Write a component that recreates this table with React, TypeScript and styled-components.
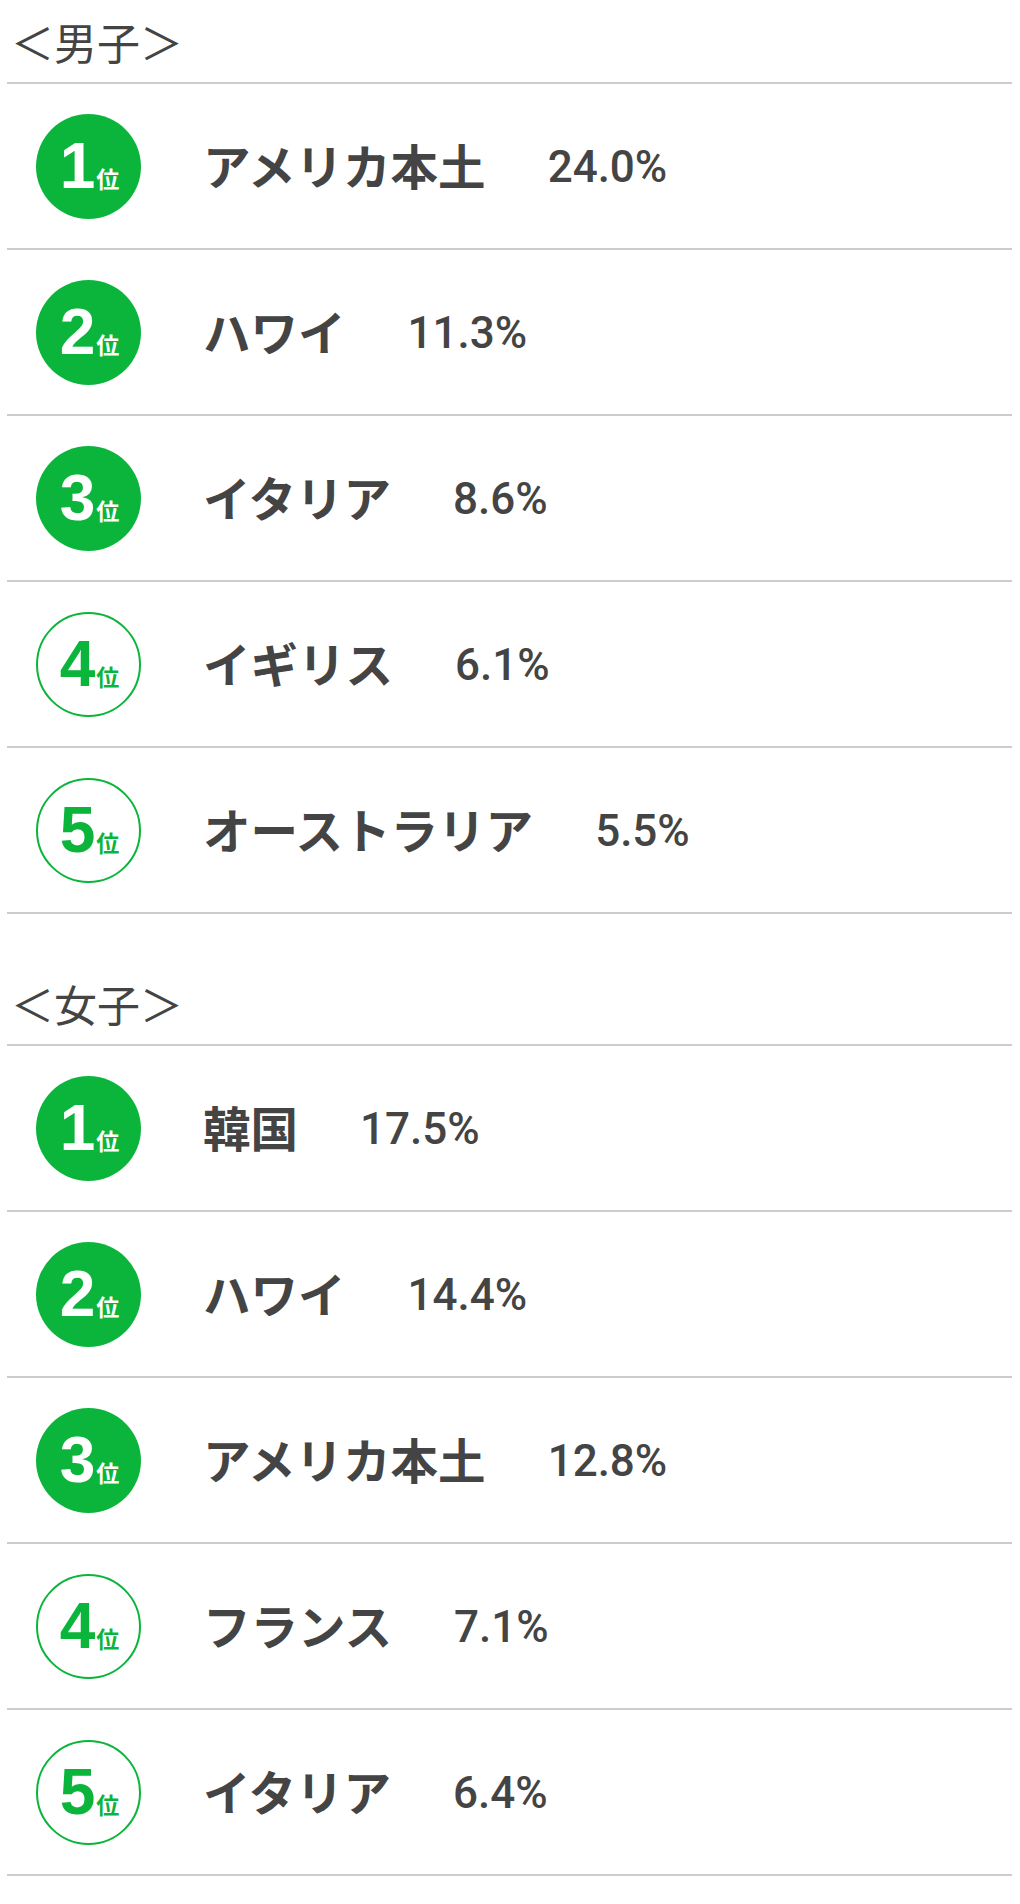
import React from "react";
import styled, { createGlobalStyle, css } from "styled-components";

const Global = createGlobalStyle`
  html, body { margin: 0; padding: 0; background: #ffffff; }
  body { font-family: "Noto Sans CJK JP", "Noto Sans", sans-serif; color: #444444; }
`;

const Page = styled.div`
  padding: 0 8px 0 7px;
`;

const Section = styled.section`
  & + & { margin-top: 48px; }
`;

const Heading = styled.h2`
  margin: 0;
  padding: 10px 0 10px 4px;
  font-family: "Noto Sans CJK JP", sans-serif;
  font-weight: 400;
  font-size: 43px;
  line-height: 62px;
  color: #444444;
  letter-spacing: 0;
`;

const List = styled.ol`
  list-style: none;
  margin: 0;
  padding: 0;
  border-top: 2px solid #cccccc;
`;

const Row = styled.li`
  display: flex;
  align-items: center;
  height: 164px;
  padding-left: 29px;
  border-bottom: 2px solid #cccccc;
`;

const Badge = styled.div<{ $filled: boolean }>`
  flex: none;
  width: 105px;
  height: 105px;
  box-sizing: border-box;
  border-radius: 50%;
  display: flex;
  align-items: center;
  justify-content: center;
  ${(p) =>
    p.$filled
      ? css`
          background: #0bb53b;
          color: #ffffff;
        `
      : css`
          background: #ffffff;
          border: 2px solid #0bb53b;
          color: #0bb53b;
        `}
`;

const RankInner = styled.span`
  display: flex;
  align-items: baseline;
  margin-left: 2px;
`;

const RankNum = styled.span`
  font-family: "Liberation Sans", Arial, sans-serif;
  font-weight: 700;
  font-size: 64px;
  line-height: 1;
  font-variant-numeric: tabular-nums;
`;

const RankUnit = styled.span`
  font-family: "Noto Sans CJK JP", sans-serif;
  font-weight: 700;
  font-size: 23px;
  line-height: 1;
  margin-left: 1px;
`;

const Body = styled.div`
  display: flex;
  align-items: baseline;
  margin-left: 62px;
`;

const Name = styled.span`
  font-family: "Noto Sans CJK JP", sans-serif;
  font-weight: 700;
  font-size: 47.5px;
  line-height: 1;
  color: #444444;
`;

const Percent = styled.span`
  margin-left: 62px;
  font-family: Roboto, "Liberation Sans", sans-serif;
  font-weight: 500;
  font-size: 44px;
  line-height: 1;
  color: #444444;
  position: relative;
  top: -3px;
`;

type Item = { name: string; pct: string };

const male: Item[] = [
  { name: "アメリカ本土", pct: "24.0%" },
  { name: "ハワイ", pct: "11.3%" },
  { name: "イタリア", pct: "8.6%" },
  { name: "イギリス", pct: "6.1%" },
  { name: "オーストラリア", pct: "5.5%" },
];

const female: Item[] = [
  { name: "韓国", pct: "17.5%" },
  { name: "ハワイ", pct: "14.4%" },
  { name: "アメリカ本土", pct: "12.8%" },
  { name: "フランス", pct: "7.1%" },
  { name: "イタリア", pct: "6.4%" },
];

const Ranking: React.FC<{ title: string; items: Item[] }> = ({ title, items }) => (
  <Section>
    <Heading>{title}</Heading>
    <List>
      {items.map((it, i) => (
        <Row key={i}>
          <Badge $filled={i < 3}>
            <RankInner>
              <RankNum>{i + 1}</RankNum>
              <RankUnit>位</RankUnit>
            </RankInner>
          </Badge>
          <Body>
            <Name>{it.name}</Name>
            <Percent>{it.pct}</Percent>
          </Body>
        </Row>
      ))}
    </List>
  </Section>
);

export default function App() {
  return (
    <>
      <Global />
      <Page>
        <Ranking title="＜男子＞" items={male} />
        <Ranking title="＜女子＞" items={female} />
      </Page>
    </>
  );
}
